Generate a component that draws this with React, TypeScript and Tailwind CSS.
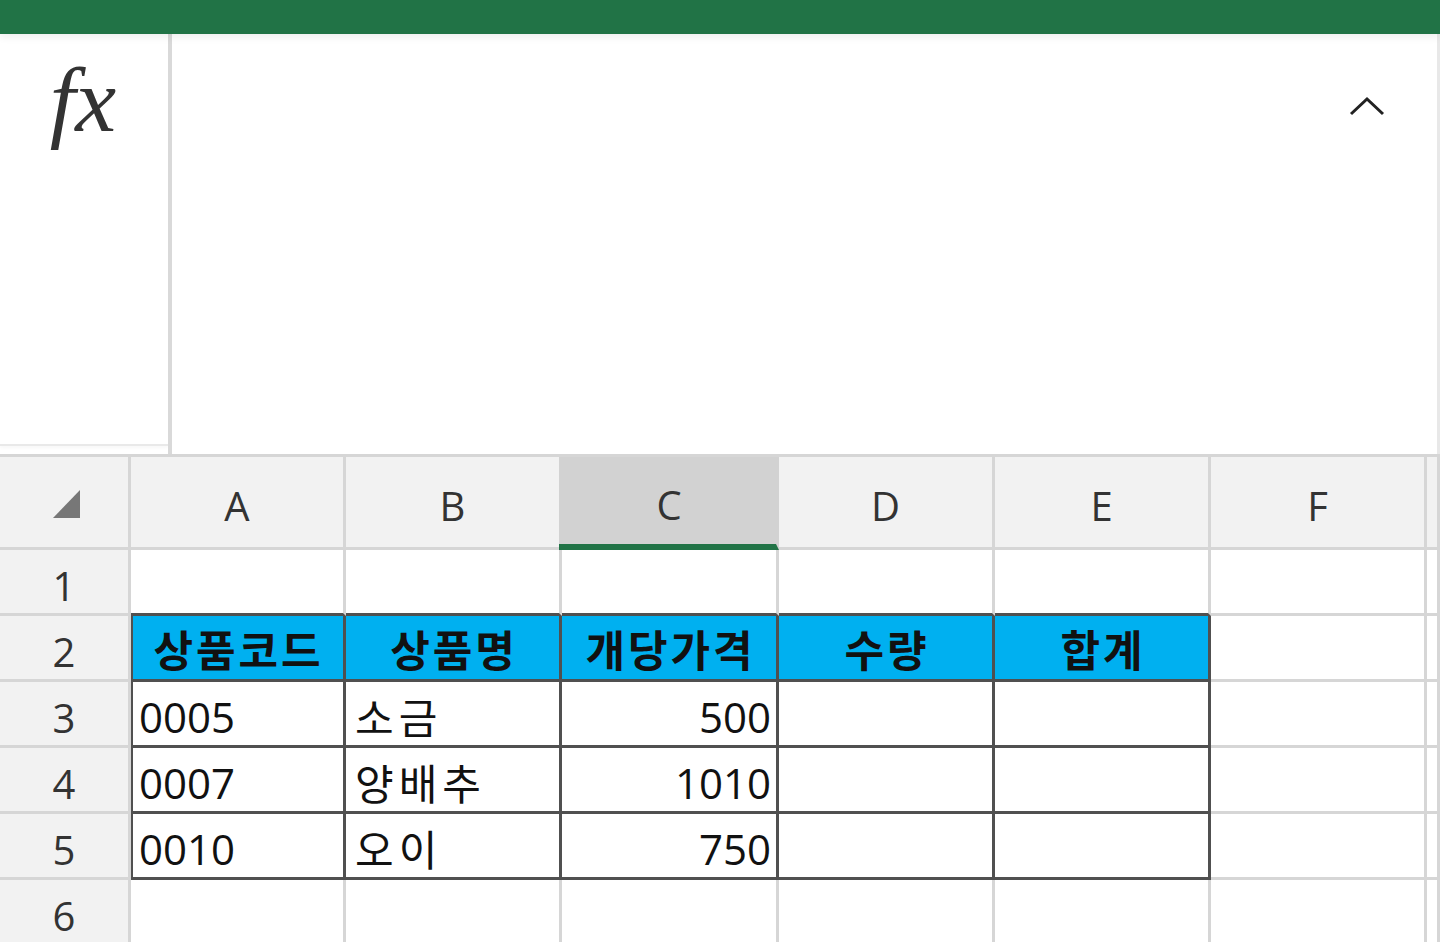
import React from "react";

const GRAY = "border-[#d6d6d6]";
const widths = ["w-[131px]", "w-[215px]", "w-[216px]", "w-[217px]", "w-[216px]", "w-[216px]", "w-[216px]", "flex-1"];

type CellProps = {
  i: number;
  className?: string;
  children?: React.ReactNode;
};

function Cell({ i, className = "", children }: CellProps) {
  return (
    <div className={`${widths[i]} shrink-0 h-full border-r-[3px] border-b-[3px] flex items-center ${className}`}>
      {children}
    </div>
  );
}

const rows: { code: string; name: string; price: string }[] = [
  { code: "0005", name: "소금", price: "500" },
  { code: "0007", name: "양배추", price: "1010" },
  { code: "0010", name: "오이", price: "750" },
];

const heads = ["상품코드", "상품명", "개당가격", "수량", "합계"];

export default function App() {
  const font = "font-['Open_Sans','Noto_Sans_CJK_KR',sans-serif]";
  return (
    <div className={`w-[1440px] h-[942px] overflow-hidden bg-white ${font}`}>
      <div className="h-[34px] bg-[#217346] relative z-10 shadow-[0_3px_8px_rgba(0,0,0,0.07)]" />
      <div className="flex h-[420px]">
        <div className="w-[168px] h-[412px] border-b-2 border-[#e9e9e9] shadow-[0_2px_3px_rgba(0,0,0,0.03)] flex justify-center pt-[12px]">
          <span className="font-['Liberation_Serif',serif] italic text-[92px] leading-none text-[#333] pr-[2px] pt-[8px]">fx</span>
        </div>
        <div className="w-[4px] bg-[#d9d9d9]" />
        <div className="flex-1 flex justify-end pt-[60px] pr-[52px]">
          <svg width="36" height="24" viewBox="0 0 36 24">
            <polyline points="2,20 18,5 34,20" fill="none" stroke="#222" strokeWidth="3" />
          </svg>
        </div>
        <div className="w-[3px] bg-[#e8e8e8]" />
      </div>

      {/* Column header row */}
      <div className={`flex h-[96px] border-t-[3px] ${GRAY} text-[40px] text-[#333]`}>
        <Cell i={0} className={`bg-[#f2f2f2] ${GRAY} justify-center`}>
          <svg width="40" height="40" viewBox="0 0 40 40" className="mt-[4px]">
            <polygon points="9,34 36,34 36,6" fill="#777" />
          </svg>
        </Cell>
        {["A", "B", "C", "D", "E", "F"].map((l, idx) => (
          <Cell
            key={l}
            i={idx + 1}
            className={
              l === "C"
                ? "bg-[#d2d2d2] border-r-[#d2d2d2] border-b-[6px] border-b-[#217346] justify-center pt-[8px] relative"
                : `bg-[#f2f2f2] ${GRAY} justify-center pt-[8px] ${l === "B" ? "border-r-[#d2d2d2]" : ""}`
            }
          >
            {l}
            {l === "C" && <div className="absolute left-[-3px] bottom-[-6px] w-[3px] h-[6px] bg-[#217346]" />}
          </Cell>
        ))}
        <Cell i={7} className={`bg-[#f2f2f2] ${GRAY}`} />
      </div>

      {/* Row 1 */}
      <div className="flex h-[66px]">
        <Cell i={0} className={`bg-[#f2f2f2] ${GRAY} justify-center text-[40px] text-[#333] pt-[8px]`}>1</Cell>
        {[1, 2, 3, 4, 5].map((i) => (
          <Cell key={i} i={i} className={`border-r-[#d6d6d6] border-b-[#505050]`} />
        ))}
        <Cell i={6} className={GRAY} />
        <Cell i={7} className={GRAY} />
      </div>

      {/* Row 2 header */}
      <div className="flex h-[66px]">
        <Cell i={0} className={`bg-[#f2f2f2] ${GRAY} justify-center text-[40px] text-[#333] pt-[8px]`}>2</Cell>
        {heads.map((h, idx) => (
          <Cell
            key={h}
            i={idx + 1}
            className={`bg-[#00b0f0] border-[#505050] justify-center font-bold text-[43px] text-[#111] pt-[2px] ${idx === 0 ? "shadow-[inset_2px_0_0_#505050]" : ""}`}
          >
            <span className="font-['Noto_Sans_CJK_KR',sans-serif] tracking-[3px] mr-[-3px]">{h}</span>
          </Cell>
        ))}
        <Cell i={6} className={GRAY} />
        <Cell i={7} className={GRAY} />
      </div>

      {rows.map((r, ri) => (
        <div key={r.code} className="flex h-[66px] text-[42px] text-[#111]">
          <Cell i={0} className={`bg-[#f2f2f2] ${GRAY} justify-center text-[40px] text-[#333] pt-[8px]`}>{ri + 3}</Cell>
          <Cell i={1} className="border-[#505050] shadow-[inset_2px_0_0_#505050] pl-[8px] pt-[6px]">{r.code}</Cell>
          <Cell i={2} className="border-[#505050] pl-[9px] pt-[4px]">
            <span className="font-['Noto_Sans_CJK_KR',sans-serif] font-normal tracking-[5px]">{r.name}</span>
          </Cell>
          <Cell i={3} className="border-[#505050] justify-end pr-[5px] pt-[6px]">{r.price}</Cell>
          <Cell i={4} className="border-[#505050]" />
          <Cell i={5} className="border-[#505050]" />
          <Cell i={6} className={GRAY} />
          <Cell i={7} className={GRAY} />
        </div>
      ))}

      {/* Row 6 */}
      <div className="flex h-[66px]">
        <Cell i={0} className={`bg-[#f2f2f2] ${GRAY} justify-center text-[40px] text-[#333] pt-[8px]`}>6</Cell>
        {[1, 2, 3, 4, 5, 6, 7].map((i) => (
          <Cell key={i} i={i} className={GRAY} />
        ))}
      </div>
    </div>
  );
}
